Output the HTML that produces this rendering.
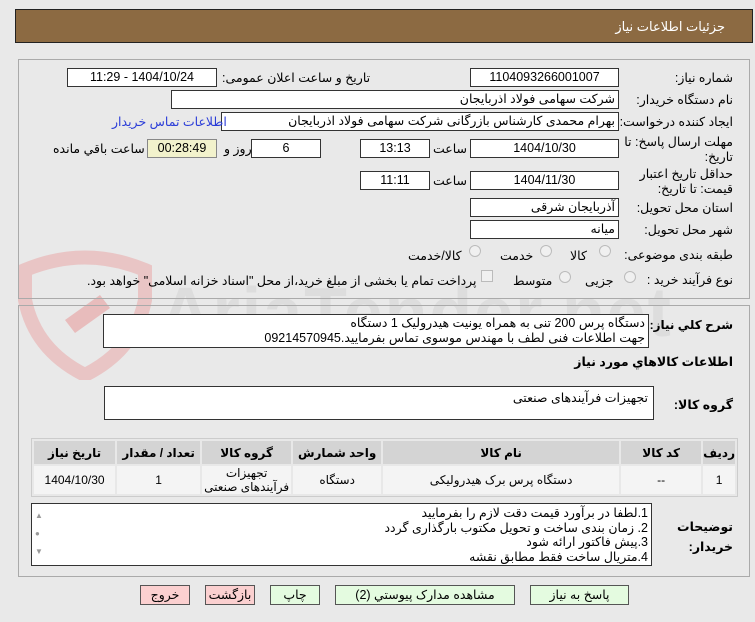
<!DOCTYPE html>
<html><head><meta charset="utf-8"><style>
*{margin:0;padding:0;box-sizing:border-box}
body{width:755px;height:622px;background:#e9e9e9;font-family:"Liberation Sans","DejaVu Sans",sans-serif;font-size:12px;color:#000;position:relative;overflow:hidden}
.a{position:absolute;white-space:nowrap}
.r{direction:rtl}
.box{position:absolute;background:#fff;border:1px solid #333;height:19px;line-height:17px;font-size:12.5px;direction:rtl;padding:0 3px;white-space:nowrap}
.c{text-align:center}
.lb{position:absolute;direction:rtl;text-align:right;right:22px;font-size:12.5px;white-space:nowrap}
.lb2{position:absolute;direction:rtl;text-align:right;right:22px;font-size:12.5px;white-space:nowrap;line-height:15px}
.rad{position:absolute;width:12px;height:12px;border-radius:50%;border:1px solid #bbb;background:#f0f0f0}
.btn{position:absolute;top:585px;height:20px;border:1px solid #555;text-align:center;line-height:18px;font-size:12.5px;direction:rtl}
table{position:absolute;left:31px;top:438px;width:707px;border-collapse:separate;border-spacing:2px;background:#e8e8e8;border:1px solid #ccc;direction:rtl}
th{background:#d4d4d4;height:23px;font-size:12px;font-weight:bold;text-align:center}
td{background:#f4f4f4;height:27px;text-align:center;font-size:12px;line-height:14px}
</style></head><body>
<div class="a" style="left:15px;top:9px;width:738px;height:34px;background:#8c6a42;border:1px solid #222"></div>
<div class="a r" style="right:30px;top:19px;color:#fff;font-size:13px">جزئیات اطلاعات نیاز</div>

<svg class="a" style="left:15px;top:250px" width="140" height="130" viewBox="0 0 140 130"><path d="M10 20 Q70 -5 130 20 L130 50 Q120 100 70 125 Q20 100 10 50Z" fill="none" stroke="#e8bcbc" stroke-width="14" opacity=".8"/><path d="M50 70 L85 45 L95 58 L60 83Z" fill="#e8bcbc"/></svg>
<div class="a" style="left:160px;top:272px;font-size:70px;font-weight:bold;color:#d6d6d6;opacity:.6;letter-spacing:2px">AriaTender.net</div>

<div class="a" style="left:18px;top:59px;width:732px;height:240px;border:1px solid #aaa"></div>
<div class="a" style="left:18px;top:305px;width:732px;height:272px;border:1px solid #aaa"></div>

<div class="lb" style="top:70px">شماره نیاز:</div>
<div class="box c" style="left:470px;top:68px;width:149px">1104093266001007</div>
<div class="a r" style="left:222px;top:70px;font-size:12.5px">تاریخ و ساعت اعلان عمومی:</div>
<div class="box c" style="left:67px;top:68px;width:150px">1404/10/24 - 11:29</div>

<div class="lb" style="top:92px">نام دستگاه خریدار:</div>
<div class="box" style="left:171px;top:90px;width:448px">شرکت سهامی فولاد اذربایجان</div>

<div class="lb" style="top:114px">ایجاد کننده درخواست:</div>
<div class="box" style="left:221px;top:112px;width:398px">بهرام محمدی کارشناس بازرگانی شرکت سهامی فولاد اذربایجان</div>
<div class="a r" style="left:112px;top:114px;color:#2a3cd8;font-size:12.5px">اطلاعات تماس خریدار</div>

<div class="lb2" style="top:135px">مهلت ارسال پاسخ: تا<br>تاریخ:</div>
<div class="box c" style="left:470px;top:139px;width:149px">1404/10/30</div>
<div class="a r" style="left:433px;top:141px;font-size:12.5px">ساعت</div>
<div class="box c" style="left:360px;top:139px;width:70px">13:13</div>
<div class="box c" style="left:251px;top:139px;width:70px">6</div>
<div class="a r" style="left:224px;top:141px;font-size:12.5px">روز و</div>
<div class="box c" style="left:147px;top:139px;width:70px;background:#f2f2cc;border-color:#888">00:28:49</div>
<div class="a r" style="left:53px;top:141px;font-size:12.5px">ساعت باقي مانده</div>

<div class="lb2" style="top:167px">حداقل تاریخ اعتبار<br>قیمت: تا تاریخ:</div>
<div class="box c" style="left:470px;top:171px;width:149px">1404/11/30</div>
<div class="a r" style="left:433px;top:173px;font-size:12.5px">ساعت</div>
<div class="box c" style="left:360px;top:171px;width:70px">11:11</div>

<div class="lb" style="top:200px">استان محل تحویل:</div>
<div class="box" style="left:470px;top:198px;width:149px">آذربایجان شرقی</div>
<div class="lb" style="top:222px">شهر محل تحویل:</div>
<div class="box" style="left:470px;top:220px;width:149px">میانه</div>

<div class="lb" style="top:247px">طبقه بندی موضوعی:</div>
<div class="rad" style="left:599px;top:245px"></div><div class="a r" style="left:570px;top:248px;font-size:12.5px">کالا</div>
<div class="rad" style="left:540px;top:245px"></div><div class="a r" style="left:500px;top:248px;font-size:12.5px">خدمت</div>
<div class="rad" style="left:469px;top:245px"></div><div class="a r" style="left:408px;top:248px;font-size:12.5px">کالا/خدمت</div>

<div class="lb" style="top:272px">نوع فرآیند خرید :</div>
<div class="rad" style="left:624px;top:271px"></div><div class="a r" style="left:585px;top:273px;font-size:12.5px">جزیی</div>
<div class="rad" style="left:559px;top:271px"></div><div class="a r" style="left:513px;top:273px;font-size:12.5px">متوسط</div>
<div class="a" style="left:481px;top:270px;width:12px;height:12px;border:1px solid #bbb;background:#f0f0f0"></div>
<div class="a r" style="left:87px;top:273px;font-size:12.5px">پرداخت تمام یا بخشی از مبلغ خرید،از محل "اسناد خزانه اسلامی" خواهد بود.</div>

<div class="lb" style="top:318px;font-weight:bold;font-size:12px">شرح كلي نياز:</div>
<div class="a" style="left:103px;top:314px;width:546px;height:34px;background:#fff;border:1px solid #333;direction:rtl;font-size:12.5px;line-height:15px;padding:1px 3px">دستگاه پرس 200 تنی به همراه یونیت هیدرولیک 1 دستگاه<br>جهت اطلاعات فنی لطف با مهندس موسوی تماس بفرمایید.09214570945</div>
<div class="lb" style="top:354px;font-weight:bold">اطلاعات كالاهاي مورد نياز</div>

<div class="lb" style="top:397px;font-weight:bold">گروه کالا:</div>
<div class="a" style="left:104px;top:386px;width:550px;height:34px;background:#fff;border:1px solid #333;direction:rtl;font-size:12.5px;padding:3px 5px">تجهیزات فرآیندهای صنعتی</div>

<table><tr><th style="width:28px">رديف</th><th style="width:80px">کد کالا</th><th style="width:236px">نام کالا</th><th style="width:88px">واحد شمارش</th><th style="width:89px">گروه کالا</th><th style="width:83px">تعداد / مقدار</th><th>تاريخ نياز</th></tr>
<tr><td>1</td><td>--</td><td>دستگاه پرس برک هیدرولیکی</td><td>دستگاه</td><td>تجهیزات فرآیندهای صنعتی</td><td>1</td><td>1404/10/30</td></tr></table>

<div class="lb2" style="top:517px;font-weight:bold;line-height:20px">توضیحات<br>خریدار:</div>
<div class="a" style="left:31px;top:503px;width:621px;height:63px;background:#fff;border:1px solid #333;direction:rtl;font-size:12.5px;line-height:14.5px;padding:2px 3px 0 0">1.لطفا در برآورد قیمت دقت لازم را بفرمایید<br>2. زمان بندی ساخت و تحویل مکتوب بارگذاری گردد<br>3.پیش فاکتور ارائه شود<br>4.متریال ساخت فقط مطابق نقشه</div>
<div class="a" style="left:35px;top:507px;color:#999;font-size:8px;line-height:18px">▲<br>●<br>▼</div>

<div class="btn" style="left:140px;width:50px;background:#fbd0d0">خروج</div>
<div class="btn" style="left:205px;width:50px;background:#fbd0d0">بازگشت</div>
<div class="btn" style="left:270px;width:50px;background:#e4fbe0">چاپ</div>
<div class="btn" style="left:335px;width:180px;background:#e4fbe0">مشاهده مدارک پیوستي (2)</div>
<div class="btn" style="left:530px;width:99px;background:#e4fbe0">پاسخ به نیاز</div>
</body></html>
